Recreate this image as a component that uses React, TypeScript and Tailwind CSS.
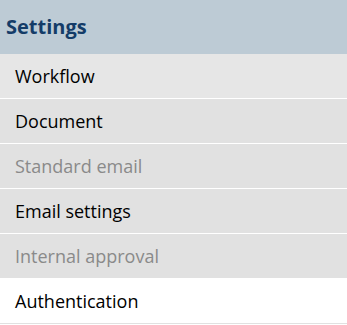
import React from 'react';

const items = [
  { label: 'Workflow', disabled: false, bg: 'bg-[#e6e6e6]' },
  { label: 'Document', disabled: false, bg: 'bg-[#e1e1e1]' },
  { label: 'Standard email', disabled: true, bg: 'bg-[#e1e1e1]' },
  { label: 'Email settings', disabled: false, bg: 'bg-[#e1e1e1]' },
  { label: 'Internal approval', disabled: true, bg: 'bg-[#e1e1e1]' },
  { label: 'Authentication', disabled: false, bg: 'bg-white' },
];

export default function App() {
  return (
    <div className="w-[347px] h-[325px] bg-white font-['Open_Sans',sans-serif]">
      <div className="h-[54px] bg-[#bdcbd5] flex items-center pl-[6px] pb-[1px]">
        <h1 className="text-[20px] font-bold text-[#143c68]">Settings</h1>
      </div>
      <ul>
        {items.map((item, i) => (
          <li
            key={item.label}
            className={`h-[45px] flex items-center pl-[15px] text-[18px] ${item.bg} ${
              i < items.length - 1 ? 'border-b border-white' : 'border-b border-[#e1e1e1]'
            } ${item.disabled ? 'text-[#8a8a8a]' : 'text-black'}`}
          >
            {item.label}
          </li>
        ))}
      </ul>
    </div>
  );
}
